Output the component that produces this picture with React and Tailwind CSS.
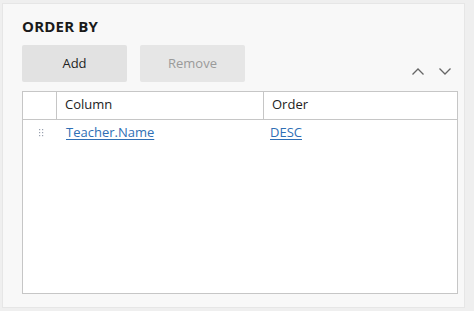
import React from "react";

const Dots = () => (
  <svg width="6" height="10" viewBox="0 0 6 10" className="text-gray-400">
    {[1, 4, 7].map((y) =>
      [1, 4].map((x) => <rect key={`${x}-${y}`} x={x} y={y} width="1.2" height="1.2" fill="currentColor" />)
    )}
  </svg>
);

const Chevron = ({ up }) => (
  <svg width="12" height="7" viewBox="0 0 12 7" fill="none" stroke="#666" strokeWidth="1.3">
    {up ? <path d="M0.5 6.5 L6 1 L11.5 6.5" /> : <path d="M0.5 0.5 L6 6 L11.5 0.5" />}
  </svg>
);

export default function App() {
  return (
    <div
      className="w-[474px] h-[311px] bg-[#efefef] pt-[3px] pl-[2px] pr-[9px] pb-[3px]"
      style={{ fontFamily: '"Open Sans", sans-serif' }}
    >
      <div className="h-full bg-[#f8f8f8] border border-[#e6e6e6] pl-[19px] pr-[6px] pt-[13px] flex flex-col">
        <h2 className="text-[15px] font-bold text-[#1a1a1a] leading-[18px] tracking-[0.2px]">ORDER BY</h2>
        <div className="flex items-end mt-[10px]">
          <button className="w-[105px] h-[37px] bg-[#e2e2e2] rounded-[2px] text-[13px] text-[#222]">Add</button>
          <button className="ml-[13px] w-[105px] h-[37px] bg-[#e6e6e6] rounded-[2px] text-[13px] text-[#9a9a9a]">Remove</button>
          <div className="ml-auto mr-[7px] mb-[7px] flex gap-[15px]">
            <Chevron up />
            <Chevron />
          </div>
        </div>
        <div className="mt-[9px] w-[436px] h-[203px] bg-white border border-[#c6c6c6]">
          <div className="flex h-[28px] border-b border-[#c6c6c6] text-[13px] text-[#222]">
            <div className="w-[34px] border-r border-[#c6c6c6]" />
            <div className="w-[207px] border-r border-[#c6c6c6] pl-[8px] pb-[1px] flex items-center">Column</div>
            <div className="pl-[8px] pb-[1px] flex items-center">Order</div>
          </div>
          <div className="flex h-[26px] text-[13px]">
            <div className="w-[34px] flex items-center justify-center pl-[2px]">
              <Dots />
            </div>
            <div className="w-[207px] pl-[9px] flex items-center">
              <a className="text-[#2f6fb5] underline underline-offset-2">Teacher.Name</a>
            </div>
            <div className="pl-[6px] flex items-center">
              <a className="text-[#2f6fb5] underline underline-offset-2">DESC</a>
            </div>
          </div>
        </div>
      </div>
    </div>
  );
}
